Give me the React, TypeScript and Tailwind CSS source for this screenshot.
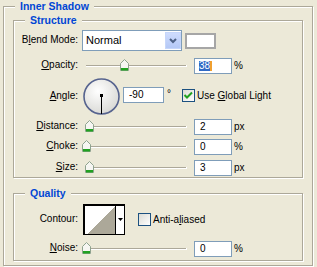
import React from 'react';

type GroupProps = {
  title: string;
  className?: string;
  children?: React.ReactNode;
};

// etched frame with a blue legend sitting on the top line
const Group: React.FC<GroupProps> = ({ title, className = '', children }) => (
  <div className={`relative border border-[#aca899] shadow-[inset_1px_1px_0_#fff,1px_1px_0_#fff] ${className}`}>
    <div className="absolute left-[11px] -top-[7px] px-[5px] bg-[#ece9d8] text-[#0046d5] font-bold text-[10.5px] leading-[12px]">
      {title}
    </div>
    {children}
  </div>
);

const Row: React.FC<{ label: React.ReactNode; className?: string; children?: React.ReactNode }> = ({
  label,
  className = '',
  children,
}) => (
  <div className={`flex items-center ${className}`}>
    <div className="w-[64px] shrink-0 text-right pb-[2px] whitespace-nowrap">{label}</div>
    <div className="ml-[4px] flex items-center">{children}</div>
  </div>
);

const Key: React.FC<{ children: React.ReactNode }> = ({ children }) => (
  <span className="underline decoration-1 underline-offset-[1px]">{children}</span>
);

const Thumb: React.FC<{ className: string }> = ({ className }) => (
  <svg className={`absolute top-[1px] ${className}`} width="9" height="12" viewBox="0 0 9 12">
    <path d="M4.5 0.5 L8.5 4.5 V11.5 H0.5 V4.5 Z" fill="#f6f6f2" stroke="#8fa38f" />
    <rect x="1" y="9" width="7" height="2.5" fill="#21a121" />
  </svg>
);

const Slider: React.FC<{ thumb: string }> = ({ thumb }) => (
  <div className="relative w-[112px] h-[16px] shrink-0">
    <div className="absolute left-[4px] top-[7px] w-[100px] h-[2px] border-t border-[#aca899] bg-white shadow-[1px_0_0_#fff]" />
    <Thumb className={thumb} />
  </div>
);

const Field: React.FC<{ className?: string; children?: React.ReactNode }> = ({ className = 'w-[38px] pl-[5px]', children }) => (
  <div className={`h-[16px] border border-[#7f9db9] bg-white flex items-center leading-none shrink-0 ${className}`}>
    {children}
  </div>
);

const Checkbox: React.FC<{ checked?: boolean }> = ({ checked }) => (
  <div className="w-[13px] h-[13px] border border-[#1c5180] bg-gradient-to-br from-[#dcdcd5] to-white shrink-0 flex items-center justify-center">
    {checked && (
      <svg width="11" height="11" viewBox="0 0 11 11">
        <path d="M1.5 5 L4 7.5 L9 2.5" fill="none" stroke="#21a121" strokeWidth="2" />
      </svg>
    )}
  </div>
);

export default function App() {
  return (
    <div className="w-[317px] h-[267px] overflow-hidden bg-[#ece9d8] text-[10px] text-black font-['Liberation_Sans',Arial,sans-serif] pt-[6px] pl-[3px]">
      <Group title="Inner Shadow" className="w-[310px] h-[260px] pl-[9px] pt-[13px]">
        <Group title="Structure" className="w-[290px] h-[158px] pt-[9px]">
          <Row label={<>B<Key>l</Key>end Mode:</>}>
            <div className="w-[100px] h-[21px] border border-[#7f9db9] bg-white flex">
              <div className="flex-1 flex items-center pl-[3px] text-[11px]">Normal</div>
              <div className="w-[16px] mt-[1px] mb-[1px] bg-gradient-to-b from-[#cfdcfd] to-[#b4c8f6] border border-[#c6d6fa] flex items-center justify-center">
                <svg width="8" height="6" viewBox="0 0 8 6">
                  <path d="M1 1 L4 4 L7 1" fill="none" stroke="#4d6185" strokeWidth="2" />
                </svg>
              </div>
            </div>
            <div className="ml-[3px] w-[31px] h-[16px] border-2 border-[#a6a6a6] bg-white" />
          </Row>

          <Row label={<><Key>O</Key>pacity:</>} className="mt-[6px]">
            <Slider thumb="left-[38px]" />
            <Field className="w-[38px] pl-[4px]">
              <span className="bg-[#316ac5] text-white leading-[10px]">38</span>
              <span className="w-[2px] h-[10px] bg-[#f0a030]" />
            </Field>
            <span className="ml-[2px]">%</span>
          </Row>

          <Row label={<><Key>A</Key>ngle:</>} className="mt-[4px]">
            <svg className="ml-[1px] shrink-0" width="37" height="37" viewBox="0 0 37 37">
              <defs>
                <radialGradient id="dial" cx="40%" cy="35%" r="70%">
                  <stop offset="0%" stopColor="#ffffff" />
                  <stop offset="100%" stopColor="#d8d8d4" />
                </radialGradient>
              </defs>
              <circle cx="18.5" cy="18.5" r="17.5" fill="url(#dial)" stroke="#56638e" strokeWidth="1.6" />
              <line x1="18.5" y1="17" x2="18.5" y2="36" stroke="#000" strokeWidth="1" />
              <rect x="17" y="16" width="3" height="3" fill="#000" />
            </svg>
            <div className="flex items-center self-start mt-[9px]">
              <Field className="ml-[3px] w-[41px] pl-[5px]">-90</Field>
              <span className="ml-[3px] self-start -mt-[1px]">°</span>
              <div className="ml-[11px]">
                <Checkbox checked />
              </div>
              <span className="ml-[2px] whitespace-nowrap">
                Use <Key>G</Key>lobal Light
              </span>
            </div>
          </Row>

          <Row label={<><Key>D</Key>istance:</>} className="mt-[3px]">
            <Slider thumb="left-[3px]" />
            <Field>2</Field>
            <span className="ml-[2px]">px</span>
          </Row>

          <Row label={<><Key>C</Key>hoke:</>} className="mt-[3px]">
            <Slider thumb="left-[0px]" />
            <Field>0</Field>
            <span className="ml-[2px]">%</span>
          </Row>

          <Row label={<><Key>S</Key>ize:</>} className="mt-[4px]">
            <Slider thumb="left-[3px]" />
            <Field>3</Field>
            <span className="ml-[2px]">px</span>
          </Row>
        </Group>

        <Group title="Quality" className="mt-[15px] w-[290px] h-[68px] pt-[10px]">
          <Row label="Contour:">
            <div className="ml-[1px] w-[42px] h-[31px] border border-black shadow-[inset_1px_1px_0_#000] bg-white flex">
              <div className="flex-1 pt-[2px] pl-[2px]">
                <svg width="29" height="27" viewBox="0 0 29 27" shapeRendering="crispEdges">
                  <polygon points="1,27 29,0 29,27" fill="#aca899" />
                </svg>
              </div>
              <div className="w-[10px] border-l border-black flex items-center justify-center">
                <svg width="5" height="3" viewBox="0 0 5 3">
                  <polygon points="0,0 5,0 2.5,3" fill="#000" />
                </svg>
              </div>
            </div>
            <div className="ml-[13px]">
              <Checkbox />
            </div>
            <span className="ml-[2px] whitespace-nowrap">
              Anti-a<Key>l</Key>iased
            </span>
          </Row>

          <Row label={<><Key>N</Key>oise:</>} className="mt-[5px]">
            <Slider thumb="left-[0px]" />
            <Field>0</Field>
            <span className="ml-[2px]">%</span>
          </Row>
        </Group>
      </Group>
    </div>
  );
}
